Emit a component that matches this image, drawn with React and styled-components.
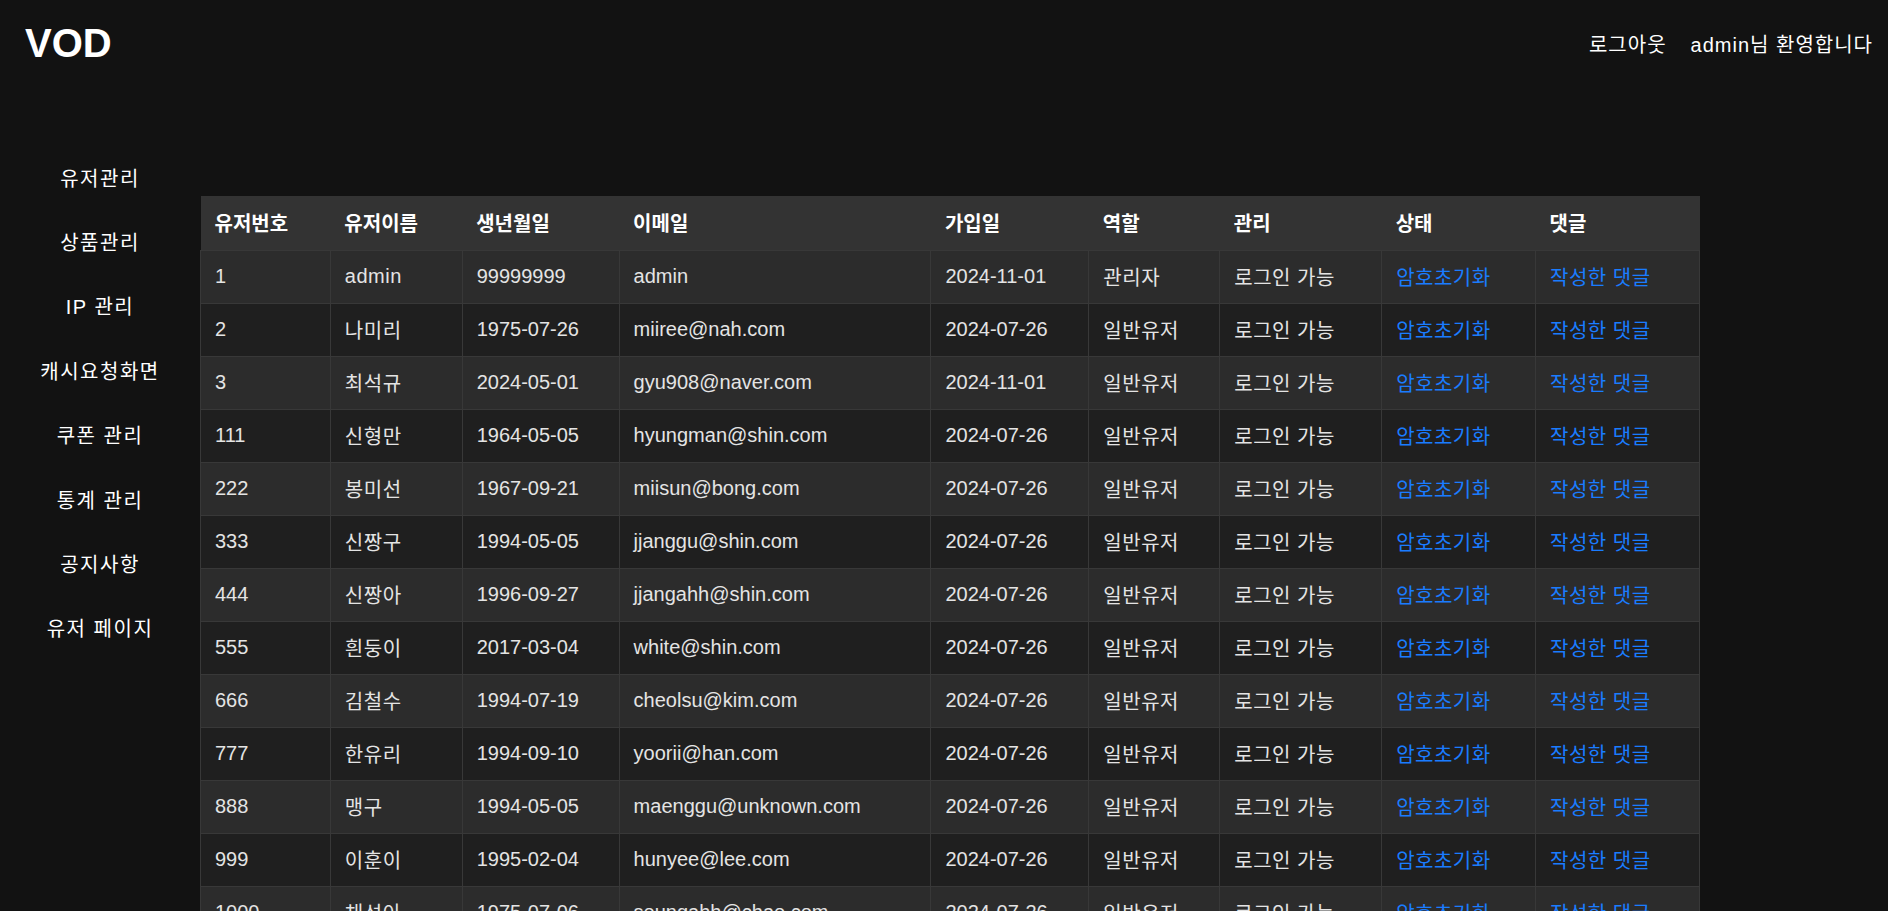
import React from 'react';
import styled, { createGlobalStyle } from 'styled-components';

const GlobalStyle = createGlobalStyle`
  html, body {
    margin: 0;
    padding: 0;
    background: #121212;
    color: #ffffff;
    font-family: "Liberation Sans", Arial, "Noto Sans CJK KR", sans-serif;
  }
  * {
    box-sizing: border-box;
  }
`;

const PageWrapper = styled.div`
  min-height: 100vh;
  background: #121212;
`;

const TopBar = styled.header`
  height: 86px;
  display: flex;
  align-items: center;
  justify-content: space-between;
  padding: 0 15px 0 25px;
`;

const Logo = styled.div`
  font-size: 40px;
  font-weight: 700;
  color: #ffffff;
`;

const UserMenu = styled.div`
  display: flex;
  align-items: center;
  gap: 24px;
  font-size: 20px;
  letter-spacing: 1px;
`;

const MenuText = styled.span`
  color: #ffffff;
  cursor: ${(props) => (props.clickable ? 'pointer' : 'default')};
`;

const Body = styled.div`
  display: flex;
  align-items: flex-start;
`;

const SideBar = styled.nav`
  width: 200px;
  flex-shrink: 0;
  padding-top: 59px;
  display: flex;
  flex-direction: column;
`;

const SideItem = styled.div`
  height: 64.4px;
  display: flex;
  align-items: center;
  justify-content: center;
  font-size: 20px;
  letter-spacing: 1.5px;
  color: #ffffff;
  cursor: pointer;
`;

const Content = styled.main`
  padding-top: 110px;
  padding-bottom: 40px;
`;

const Table = styled.table`
  width: 1500px;
  border-collapse: collapse;
  font-size: 20px;
`;

const HeadCell = styled.th`
  width: ${(props) => props.w}px;
  height: 54px;
  padding: 0 14px;
  text-align: left;
  font-weight: 700;
  color: #ffffff;
  background: #333333;
`;

const Row = styled.tr`
  background: ${(props) => (props.odd ? '#2c2c2c' : '#1f1f1f')};
`;

const Cell = styled.td`
  height: 53px;
  padding: 0 14px;
  border: 1px solid #383838;
  color: #e4e4e4;
  white-space: nowrap;
  letter-spacing: ${(props) => (props.kr ? '0.5px' : 'normal')};
`;

const LinkText = styled.a`
  color: #1a7cff;
  text-decoration: none;
  cursor: pointer;
`;

const menus = ['유저관리', '상품관리', 'IP 관리', '캐시요청화면', '쿠폰 관리', '통계 관리', '공지사항', '유저 페이지'];

const columns = [
  { label: '유저번호', w: 130 },
  { label: '유저이름', w: 132 },
  { label: '생년월일', w: 157 },
  { label: '이메일', w: 312 },
  { label: '가입일', w: 158 },
  { label: '역할', w: 131 },
  { label: '관리', w: 162 },
  { label: '상태', w: 154 },
  { label: '댓글', w: 164 },
];

const users = [
  { id: 1, name: 'admin', birth: '99999999', email: 'admin', joined: '2024-11-01', role: '관리자' },
  { id: 2, name: '나미리', birth: '1975-07-26', email: 'miiree@nah.com', joined: '2024-07-26', role: '일반유저' },
  { id: 3, name: '최석규', birth: '2024-05-01', email: 'gyu908@naver.com', joined: '2024-11-01', role: '일반유저' },
  { id: 111, name: '신형만', birth: '1964-05-05', email: 'hyungman@shin.com', joined: '2024-07-26', role: '일반유저' },
  { id: 222, name: '봉미선', birth: '1967-09-21', email: 'miisun@bong.com', joined: '2024-07-26', role: '일반유저' },
  { id: 333, name: '신짱구', birth: '1994-05-05', email: 'jjanggu@shin.com', joined: '2024-07-26', role: '일반유저' },
  { id: 444, name: '신짱아', birth: '1996-09-27', email: 'jjangahh@shin.com', joined: '2024-07-26', role: '일반유저' },
  { id: 555, name: '흰둥이', birth: '2017-03-04', email: 'white@shin.com', joined: '2024-07-26', role: '일반유저' },
  { id: 666, name: '김철수', birth: '1994-07-19', email: 'cheolsu@kim.com', joined: '2024-07-26', role: '일반유저' },
  { id: 777, name: '한유리', birth: '1994-09-10', email: 'yoorii@han.com', joined: '2024-07-26', role: '일반유저' },
  { id: 888, name: '맹구', birth: '1994-05-05', email: 'maenggu@unknown.com', joined: '2024-07-26', role: '일반유저' },
  { id: 999, name: '이훈이', birth: '1995-02-04', email: 'hunyee@lee.com', joined: '2024-07-26', role: '일반유저' },
  { id: 1000, name: '채성아', birth: '1975-07-06', email: 'seungahh@chae.com', joined: '2024-07-26', role: '일반유저' },
];

const App = () => {
  return (
    <PageWrapper>
      <GlobalStyle />
      <TopBar>
        <Logo>VOD</Logo>
        <UserMenu>
          <MenuText clickable>로그아웃</MenuText>
          <MenuText>admin님 환영합니다</MenuText>
        </UserMenu>
      </TopBar>
      <Body>
        <SideBar>
          {menus.map((menu) => (
            <SideItem key={menu}>{menu}</SideItem>
          ))}
        </SideBar>
        <Content>
          <Table>
            <thead>
              <tr>
                {columns.map((col) => (
                  <HeadCell key={col.label} w={col.w}>{col.label}</HeadCell>
                ))}
              </tr>
            </thead>
            <tbody>
              {users.map((user, i) => (
                <Row key={user.id} odd={i % 2 === 0}>
                  <Cell>{user.id}</Cell>
                  <Cell kr>{user.name}</Cell>
                  <Cell>{user.birth}</Cell>
                  <Cell>{user.email}</Cell>
                  <Cell>{user.joined}</Cell>
                  <Cell kr>{user.role}</Cell>
                  <Cell kr>로그인 가능</Cell>
                  <Cell kr><LinkText>암호초기화</LinkText></Cell>
                  <Cell kr><LinkText>작성한 댓글</LinkText></Cell>
                </Row>
              ))}
            </tbody>
          </Table>
        </Content>
      </Body>
    </PageWrapper>
  );
};

export default App;
